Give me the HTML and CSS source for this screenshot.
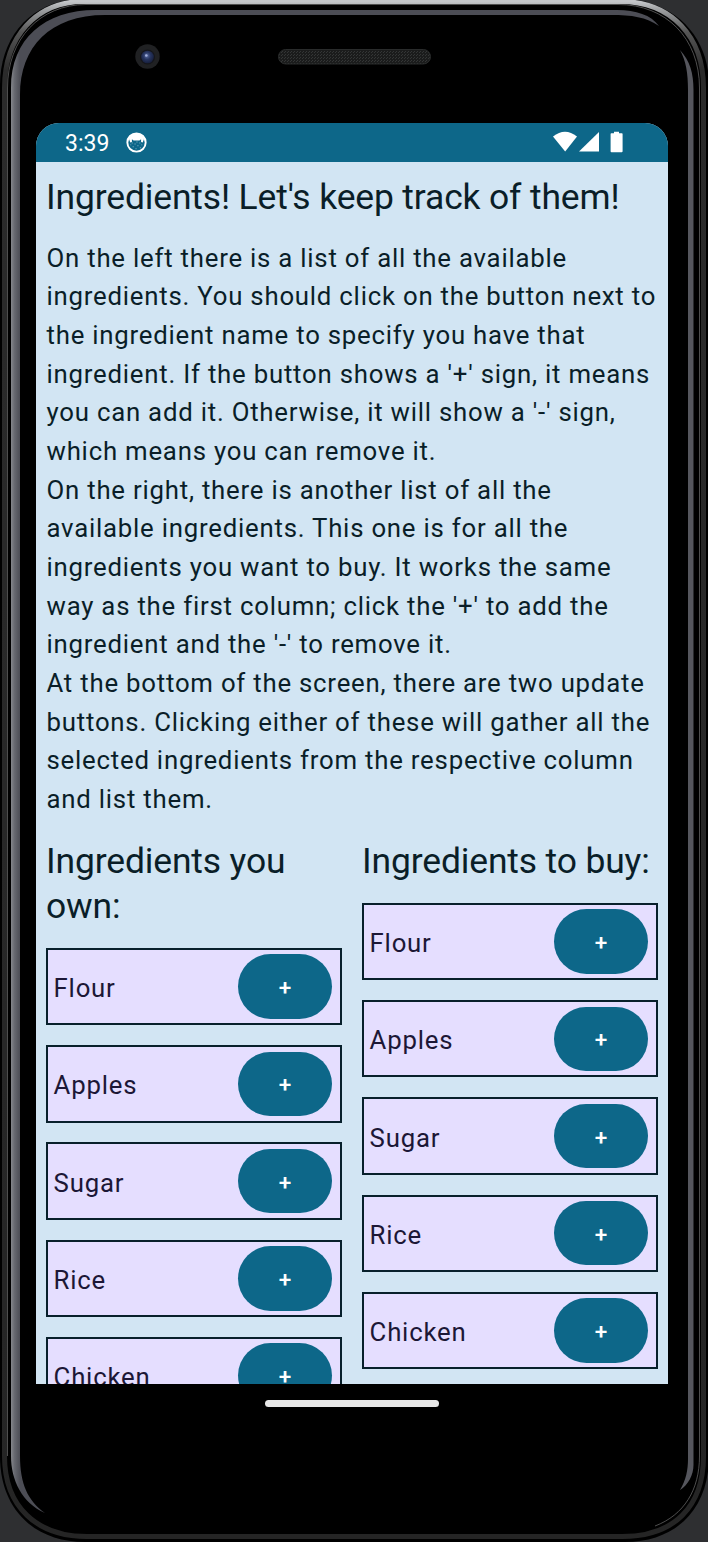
FILE: index.html
```
<!DOCTYPE html>
<html lang="en">
<head>
<meta charset="utf-8">
<title>Ingredients</title>
<link rel="stylesheet" href="styles.css">
</head>
<body>
<div class="phone">
  <svg class="frame" viewBox="0 0 708 1542" aria-hidden="true">
    <defs>
      <linearGradient id="rim" x1="0" y1="0" x2="0" y2="1">
        <stop offset="0" stop-color="#c4c6c9"/><stop offset=".006" stop-color="#9a9c9e"/><stop offset=".02" stop-color="#555"/><stop offset=".045" stop-color="#2b2b2b"/><stop offset="1" stop-color="#252525"/>
      </linearGradient>
      <linearGradient id="edge" gradientUnits="userSpaceOnUse" x1="11" y1="0" x2="20" y2="0">
        <stop offset="0" stop-color="#85878c"/><stop offset=".4" stop-color="#66686f"/><stop offset="1" stop-color="#4c4d55"/>
      </linearGradient>
      <pattern id="mesh" width="3" height="3" patternUnits="userSpaceOnUse">
        <rect width="3" height="3" fill="#1b1c1c"/><path d="M0 0h1v1H0zM2 1h1v1H2z" fill="#343636"/>
      </pattern>
      <radialGradient id="lens" cx=".45" cy=".4" r=".6">
        <stop offset="0" stop-color="#5a6da4"/><stop offset=".5" stop-color="#26345f"/><stop offset="1" stop-color="#171f3c"/>
      </radialGradient>
    </defs>
    <path fill="#000" d="M84-1H620C676-1 709 38 709 85V1456C709 1510 675 1542 625 1542H85C35 1542 0 1510 0 1456V85C0 36 32-1 84-1Z"/>
    <path fill="none" stroke="url(#rim)" stroke-width="5" d="M84 1.5H620C672 1.5 703.5 37 703.5 88V1456C703.5 1507 674 1536.5 622 1536.5H87C37 1536.5 4.500 1507 4.500 1456V88C4.500 37 36 1.500 84 1.500Z"/>
    <path fill="none" stroke="#626262" stroke-width="1" d="M7.500 1456V88C7.500 39 40 4.500 86 4.500H618C666 4.500 699.500 38 699.500 88V1456C699.500 1490 684 1515 655 1526" opacity=".8"/>
    <path fill="url(#edge)" d="M11 1456V88C11 39 44 10 96 10H617C636 10 651 15 659 26C646 17 632 15 611 15H105C50 15 20 47 20 95V1456C20 1484 28 1501 45 1513C22 1503 11 1480 11 1456Z"/>
    <path fill="#55565d" d="M680 50C690 61 693.500 73 693.500 90V1465C693.500 1475 688 1485 680 1490C686 1480 688 1470 688 1459V90C688 73 686 61 680 50Z"/>
    <circle cx="147.500" cy="56.500" r="12.200" fill="#202123"/>
    <circle cx="147.500" cy="57" r="7.500" fill="#15161b"/>
    <circle cx="147.500" cy="57" r="6.300" fill="url(#lens)"/>
    <circle cx="146.300" cy="55.500" r="1.300" fill="#a4b1dc"/>
    <rect x="278.500" y="49.500" width="152" height="14.500" rx="7.200" fill="url(#mesh)" stroke="#292b2b"/>
  </svg>
  <div class="screen">
    <header class="status">
      <span class="clock">3:39</span>
      <svg class="cat" viewBox="0 0 22 22"><circle cx="11" cy="11" r="9.600" fill="none" stroke="#fff" stroke-width="2"/><path fill="#fff" d="M3 7Q5 1.500 11 1.500T19 7L17.500 11 15.800 10.500V7.500L14 9H8L6.200 7.500V10.500L4.500 11Z"/><path fill="#fff" opacity=".55" d="M6 11h1v1H6zM9 12h1v1H9zM14 11h1v1h-1zM12 14h1v1h-1zM7 15h1v1H7zM16 13h1v1h-1zM11 10h1v1h-1zM4.500 13h1v1h-1zM10 17h1v1h-1zM14.500 16h1v1h-1z"/></svg>
      <svg class="signals" viewBox="0 0 72 22"><g fill="#fff"><path d="M0 5.500Q12-4 24 5.500L12.200 20.500Z"/><path d="M26 20.500 46 1V20.500Z"/><path d="M57.600 3Q57.600 2.300 58.300 2.300H61V.8H66V2.300H68.900Q69.600 2.300 69.600 3V20.300Q69.600 21.200 68.700 21.200H58.500Q57.600 21.200 57.600 20.300Z"/></g></svg>
    </header>
    <main class="content">
      <h1 class="title">Ingredients! Let's keep track of them!</h1>
      <p class="intro">On the left there is a list of all the available<br>ingredients. You should click on the button next to<br>the ingredient name to specify you have that<br>ingredient. If the button shows a '+' sign, it means<br>you can add it. Otherwise, it will show a '-' sign,<br>which means you can remove it.<br>On the right, there is another list of all the<br>available ingredients. This one is for all the<br>ingredients you want to buy. It works the same<br>way as the first column; click the '+' to add the<br>ingredient and the '-' to remove it.<br>At the bottom of the screen, there are two update<br>buttons. Clicking either of these will gather all the<br>selected ingredients from the respective column<br>and list them.</p>
      <div class="columns">
        <section class="column">
          <h2 class="title">Ingredients you<br>own:</h2>
          <div class="item"><span>Flour</span><button class="add">+</button></div>
          <div class="item"><span>Apples</span><button class="add">+</button></div>
          <div class="item"><span>Sugar</span><button class="add">+</button></div>
          <div class="item"><span>Rice</span><button class="add">+</button></div>
          <div class="item"><span>Chicken</span><button class="add">+</button></div>
        </section>
        <section class="column">
          <h2 class="title">Ingredients to buy:</h2>
          <div class="item"><span>Flour</span><button class="add">+</button></div>
          <div class="item"><span>Apples</span><button class="add">+</button></div>
          <div class="item"><span>Sugar</span><button class="add">+</button></div>
          <div class="item"><span>Rice</span><button class="add">+</button></div>
          <div class="item"><span>Chicken</span><button class="add">+</button></div>
        </section>
      </div>
    </main>
  </div>
  <div class="home"></div>
</div>
</body>
</html>
```
FILE: styles.css
```
* { box-sizing: border-box; }
body { margin: 0; background: #2e2f31; font-family: Roboto, sans-serif; }
.phone { position: relative; width: 708px; height: 1542px; padding: 123px 40px 0 36px; overflow: hidden; }
.frame { position: absolute; inset: 0; width: 708px; height: 1542px; }
.screen { position: relative; display: flex; flex-direction: column; height: 1261.4px; border-radius: 23px 23px 0 0; overflow: hidden; background: #d2e5f3; }
.status { flex: none; display: flex; align-items: center; height: 38.6px; padding: 0 43px 0 29px; background: #0d6789; color: #fff; }
.clock { font-size: 23px; line-height: 36px; padding-top: 3px; width: 61px; }
.cat { width: 21px; height: 21px; }
.signals { width: 72px; height: 22px; margin-left: auto; }
.content { padding: 13.4px 10px 0; color: #0a1e28; }
.title { margin: 0; font-size: 35.45px; font-weight: 400; line-height: 45.1px; letter-spacing: -.135px; white-space: nowrap; }
.intro { margin: 18.6px 0 20.8px; padding-left: .5px; font-size: 25.78px; line-height: 38.66px; letter-spacing: .775px; white-space: nowrap; }
.columns { display: grid; grid-template-columns: 1fr 1fr; gap: 20px; }
.column .title { margin-bottom: 18.6px; }
.item { display: flex; align-items: center; justify-content: space-between; height: 77.3px; margin-bottom: 19.9px; padding: 0 8px 0 5.6px; border: 2px solid #08202b; background: #e5deff; color: #1c1736; font-size: 25.78px; letter-spacing: .775px; }
.item span { padding-top: 3px; }
.add { width: 94px; height: 64.5px; padding: 2px 0 0; border: 0; border-radius: 33px; background: #0d6789; color: #fff; font: 500 22.6px Roboto, sans-serif; }
.home { position: relative; width: 174px; height: 6.5px; margin: 16.1px auto 0; border-radius: 4px; background: #e8e8e8; }
```
